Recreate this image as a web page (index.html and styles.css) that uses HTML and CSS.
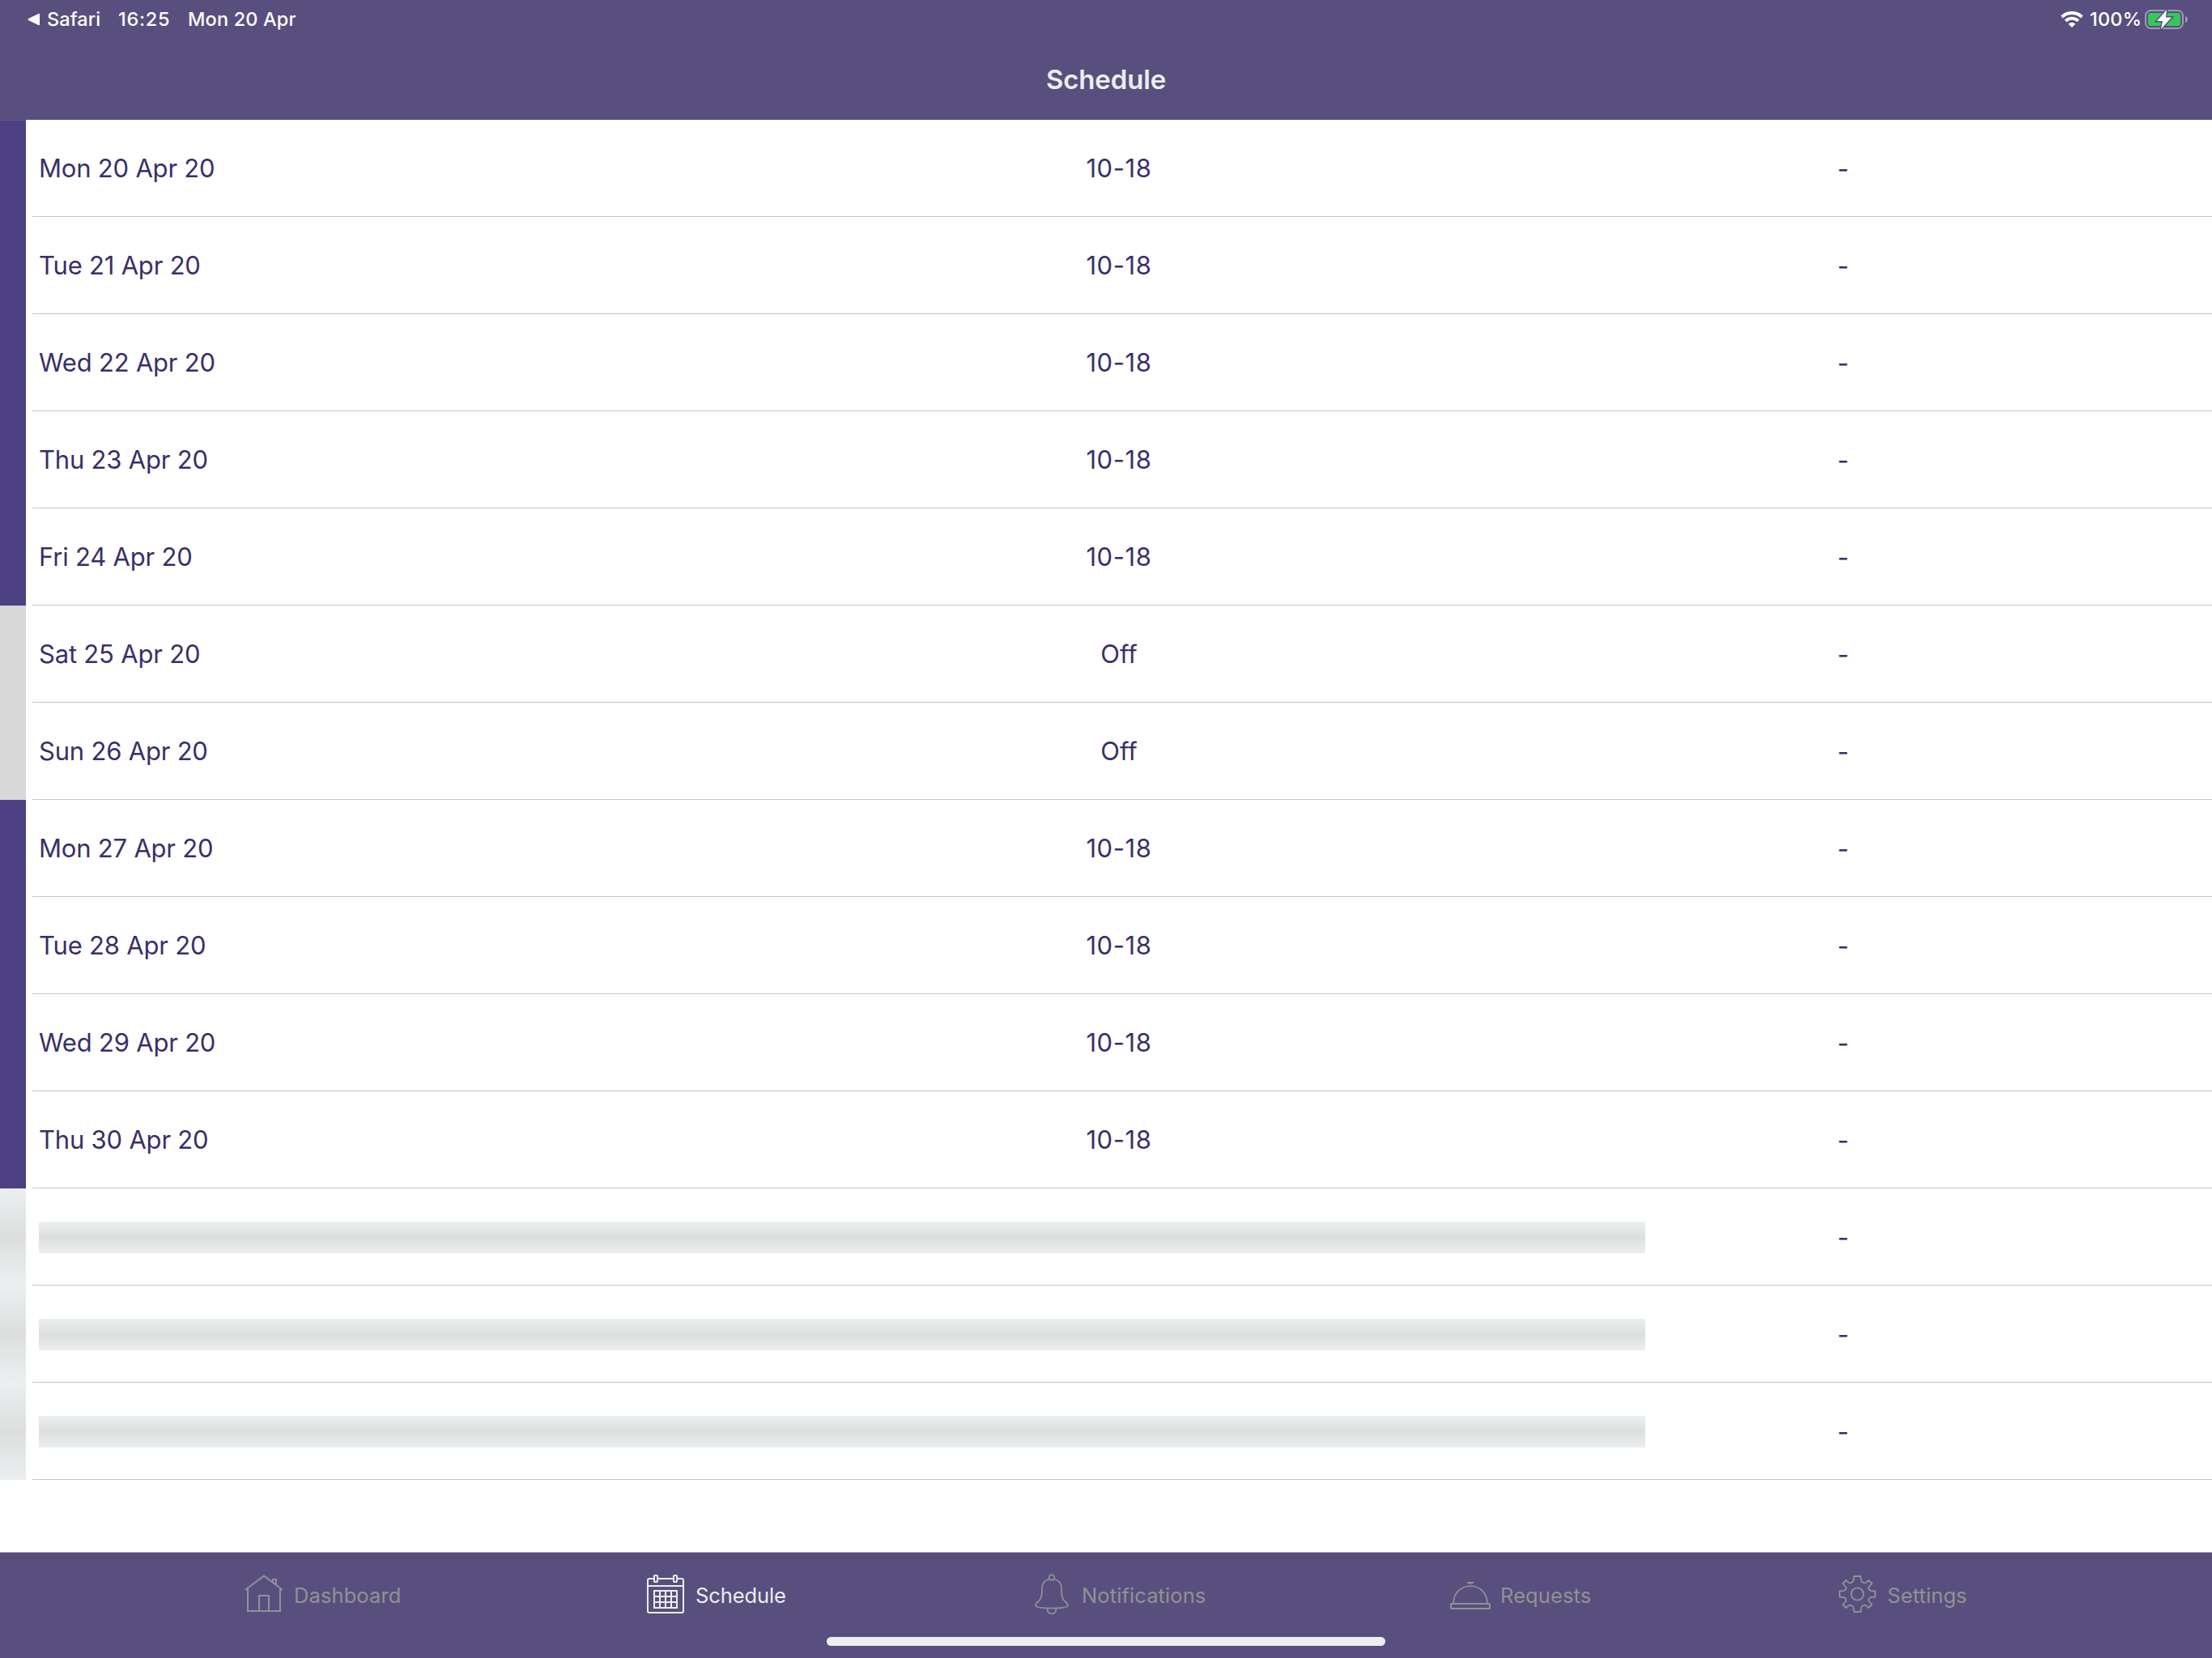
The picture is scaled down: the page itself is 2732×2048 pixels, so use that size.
FILE: index.html
```
<!DOCTYPE html>
<html lang="en">
<head>
    <meta charset="UTF-8">
    <meta name="viewport" content="width=device-width, initial-scale=1.0">
    <title>Schedule</title>
    <link rel="stylesheet" href="styles.css">
</head>
<body>
    <header class="header">
        <div class="status-bar">
            <svg class="back-arrow" width="16" height="16" viewBox="0 0 16 16"><path d="M1.5 8 L14 1.8 V14.2 Z" fill="#fff" stroke="#fff" stroke-width="2" stroke-linejoin="round"/></svg>
            <span class="status-app">Safari</span>
            <span class="status-time">16:25</span>
            <span class="status-date">Mon 20 Apr</span>
            <div class="status-right">
                <svg class="wifi" width="28" height="20" viewBox="0 0 28 20">
                    <path d="M1.6 7 A17.8 17.8 0 0 1 26.4 7" fill="none" stroke="#fff" stroke-width="4"/>
                    <path d="M6.2 11.8 A11.2 11.2 0 0 1 21.8 11.8" fill="none" stroke="#fff" stroke-width="3.8"/>
                    <path d="M14 20 L9.6 15.6 A6.4 6.4 0 0 1 18.4 15.6 Z" fill="#fff"/>
                </svg>
                <span class="status-percent">100%</span>
                <svg class="battery" width="54" height="24" viewBox="0 0 54 24">
                    <rect x="1" y="1" width="46" height="22" rx="6.5" fill="none" stroke="#9f9ab5" stroke-width="2"/>
                    <path d="M50 8 A4.2 4.2 0 0 1 50 16 Z" fill="#9f9ab5"/>
                    <rect x="4" y="4" width="40" height="16" rx="3.5" fill="#35c759"/>
                    <path d="M27 0 L15 14 H22 L20 24 L33 9.5 H26 Z" fill="#fff" stroke="#584f7e" stroke-width="3" paint-order="stroke"/>
                </svg>
            </div>
        </div>
        <h1 class="title">Schedule</h1>
    </header>

    <main class="schedule">
        <div class="row first"><span class="mark"></span><div class="cells"><span class="date">Mon 20 Apr 20</span><span class="shift">10-18</span><span class="note">-</span></div></div>
        <div class="row"><span class="mark"></span><div class="cells"><span class="date">Tue 21 Apr 20</span><span class="shift">10-18</span><span class="note">-</span></div></div>
        <div class="row"><span class="mark"></span><div class="cells"><span class="date">Wed 22 Apr 20</span><span class="shift">10-18</span><span class="note">-</span></div></div>
        <div class="row"><span class="mark"></span><div class="cells"><span class="date">Thu 23 Apr 20</span><span class="shift">10-18</span><span class="note">-</span></div></div>
        <div class="row"><span class="mark"></span><div class="cells"><span class="date">Fri 24 Apr 20</span><span class="shift">10-18</span><span class="note">-</span></div></div>
        <div class="row off"><span class="mark"></span><div class="cells"><span class="date">Sat 25 Apr 20</span><span class="shift">Off</span><span class="note">-</span></div></div>
        <div class="row off"><span class="mark"></span><div class="cells"><span class="date">Sun 26 Apr 20</span><span class="shift">Off</span><span class="note">-</span></div></div>
        <div class="row"><span class="mark"></span><div class="cells"><span class="date">Mon 27 Apr 20</span><span class="shift">10-18</span><span class="note">-</span></div></div>
        <div class="row"><span class="mark"></span><div class="cells"><span class="date">Tue 28 Apr 20</span><span class="shift">10-18</span><span class="note">-</span></div></div>
        <div class="row"><span class="mark"></span><div class="cells"><span class="date">Wed 29 Apr 20</span><span class="shift">10-18</span><span class="note">-</span></div></div>
        <div class="row"><span class="mark"></span><div class="cells"><span class="date">Thu 30 Apr 20</span><span class="shift">10-18</span><span class="note">-</span></div></div>
        <!-- still loading -->
        <div class="row loading"><span class="mark"></span><div class="cells"><span class="skeleton"></span><span class="note">-</span></div></div>
        <div class="row loading"><span class="mark"></span><div class="cells"><span class="skeleton"></span><span class="note">-</span></div></div>
        <div class="row loading"><span class="mark"></span><div class="cells"><span class="skeleton"></span><span class="note">-</span></div></div>
    </main>

    <footer class="footer">
        <nav class="tabs">
            <a class="tab">
                <svg width="48" height="50" viewBox="0 0 48 50" fill="none" stroke="currentColor" stroke-width="2">
                    <path d="M0.8 20 L24 2.5 L47.2 20 M4 18 V46 H44 V18 M18 46 V27 H30 V46 M35 9.5 V7 H39 V13"/>
                </svg>
                <span>Dashboard</span>
            </a>
            <a class="tab active">
                <svg width="48" height="50" viewBox="0 0 48 50" fill="none" stroke="currentColor" stroke-width="2">
                    <path d="M9 6 H3 Q1 6 1 8 V46 Q1 48 3 48 H43 Q45 48 45 46 V8 Q45 6 43 6 H37 M13 6 H33 M1 15 H45"/>
                    <rect x="9" y="2" width="4" height="8" rx="1"/>
                    <rect x="33" y="2" width="4" height="8" rx="1"/>
                    <path d="M9 21 H37 V42 H9 Z M9 28 H37 M9 35 H37 M16 21 V42 M23 21 V42 M30 21 V42"/>
                </svg>
                <span>Schedule</span>
            </a>
            <a class="tab">
                <svg width="46" height="50" viewBox="0 0 46 50" fill="none" stroke="currentColor" stroke-width="1.7">
                    <circle cx="21" cy="4.5" r="3.3"/>
                    <path d="M18 6.5 C12 8 9 12.5 9 18 C9 27 8.5 31 3 35.5 C1 37.2 0.5 38.5 1.5 39.8 C3 42 11 42.5 21 42.5 C31 42.5 39 42 40.5 39.8 C41.5 38.5 41 37.2 39 35.5 C33.5 31 33 27 33 18 C33 12.5 30 8 24 6.5"/>
                    <path d="M16.3 42.5 C14.5 46 17 49.3 21 49.3 C25 49.3 27.5 46 25.7 42.5"/>
                </svg>
                <span>Notifications</span>
            </a>
            <a class="tab">
                <svg width="50" height="50" viewBox="0 0 50 50" fill="none" stroke="currentColor" stroke-width="2">
                    <rect x="1" y="37" width="48" height="6" rx="0.6"/>
                    <path d="M4 37 C4 8 46 8 46 37" stroke-width="1.7"/>
                    <path d="M21 11 H29"/>
                    <path d="M24 12.5 H26" stroke-width="1.5"/>
                </svg>
                <span>Requests</span>
            </a>
            <a class="tab">
                <svg width="48" height="50" viewBox="0 0 48 50" fill="none" stroke="currentColor" stroke-width="1.8" stroke-linejoin="round">
                    <circle cx="23" cy="25" r="7.7"/>
                    <path d="M19 3 H27 L28 9 Q29 10.5 31 11.2 Q32.5 11.6 34 10.7 L37 8 L41 12 L37.5 16 Q36.5 17 37 18.5 Q38 20.5 39.5 20.8 L45 21.5 V28.5 L39.5 29.2 Q38 29.5 37 31.5 Q36.5 33 37.5 34 L41 38 L37 42 L34 39.3 Q32.5 38.4 31 38.8 Q29 39.5 28 41 L27 47 H19 L18 41 Q17 39.5 15 38.8 Q13.5 38.4 12 39.3 L9 42 L5 38 L8.5 34 Q9.5 33 9 31.5 Q8 29.5 6.5 29.2 L1 28.5 V21.5 L6.5 20.8 Q8 20.5 9 18.5 Q9.5 17 8.5 16 L5 12 L9 8 L12 10.7 Q13.5 11.6 15 11.2 Q17 10.5 18 9 Z"/>
                </svg>
                <span>Settings</span>
            </a>
        </nav>
        <div class="home-indicator"></div>
    </footer>
</body>
</html>
```
FILE: styles.css
```
* {
    margin: 0;
    padding: 0;
    box-sizing: border-box;
}

body {
    width: 2732px;
    height: 2048px;
    display: flex;
    flex-direction: column;
    overflow: hidden;
    background: #fff;
    color: #392f69;
    font-family: Inter, "Liberation Sans", sans-serif;
}

.header {
    height: 148px;
    background: #584f7e;
}

.status-bar {
    height: 48px;
    padding: 0 29px 0 34px;
    display: flex;
    align-items: center;
    color: #fff;
    font-size: 23.5px;
    font-weight: 500;
    white-space: nowrap;
}

.status-bar span {
    padding-bottom: 1px;
}

.status-app {
    width: 88px;
    margin-left: 8px;
    letter-spacing: 0.1px;
}

.status-time {
    width: 86px;
    letter-spacing: 0.7px;
}

.status-date {
    letter-spacing: 0.15px;
}

.status-right {
    margin-left: auto;
    display: flex;
    align-items: center;
}

.status-percent {
    width: 68px;
    margin-left: 8px;
    letter-spacing: 0.2px;
}

.title {
    height: 100px;
    line-height: 101px;
    color: #ebeeee;
    font-size: 33px;
    font-weight: 600;
    letter-spacing: -0.15px;
    text-align: center;
}

.schedule {
    flex: 1;
}

.row {
    height: 120px;
    display: flex;
    gap: 8px;
}

.mark {
    width: 32px;
    background: #4d4184;
}

.first .mark {
    border-top: 1px solid #655991;
}

.off .mark {
    background: #d8d8d8;
}

.loading .mark,
.skeleton {
    background: linear-gradient(#ebefef, #dddfdf 50%, #ebefef);
}

.cells {
    flex: 1;
    padding: 1px 0 0 8px;
    display: grid;
    grid-template-columns: 684px 1300px 489px;
    align-items: center;
    border-bottom: 1px solid #c6c6c8;
    font-size: 31px;
    font-feature-settings: "calt" 0;
}

.date,
.shift {
    padding-bottom: 2px;
}

.date {
    letter-spacing: -0.2px;
}

.shift {
    letter-spacing: 0.6px;
}

.off .shift {
    letter-spacing: 0;
}

.shift,
.note {
    text-align: center;
}

.skeleton {
    grid-column: span 2;
    height: 39px;
}

.footer {
    height: 131px;
    background: #584f7e;
    border-top: 1px solid #aaa6bb;
}

.tabs {
    height: 101px;
    padding-left: 302px;
    display: grid;
    grid-template-columns: 497px 479px 513px 480px 1fr;
    align-items: center;
    color: #929292;
    font-size: 25.5px;
}

.tab {
    display: flex;
    align-items: center;
    gap: 12px;
}

.tab span {
    padding-top: 3px;
    letter-spacing: 0.1px;
}

.tab:first-child {
    gap: 13px;
}

.tab.active {
    color: #ebeeee;
}

.tab.active span {
    letter-spacing: -0.1px;
}

.home-indicator {
    width: 690px;
    height: 11px;
    margin: 3px auto 0;
    border-radius: 6px;
    background: #eee;
}
```
